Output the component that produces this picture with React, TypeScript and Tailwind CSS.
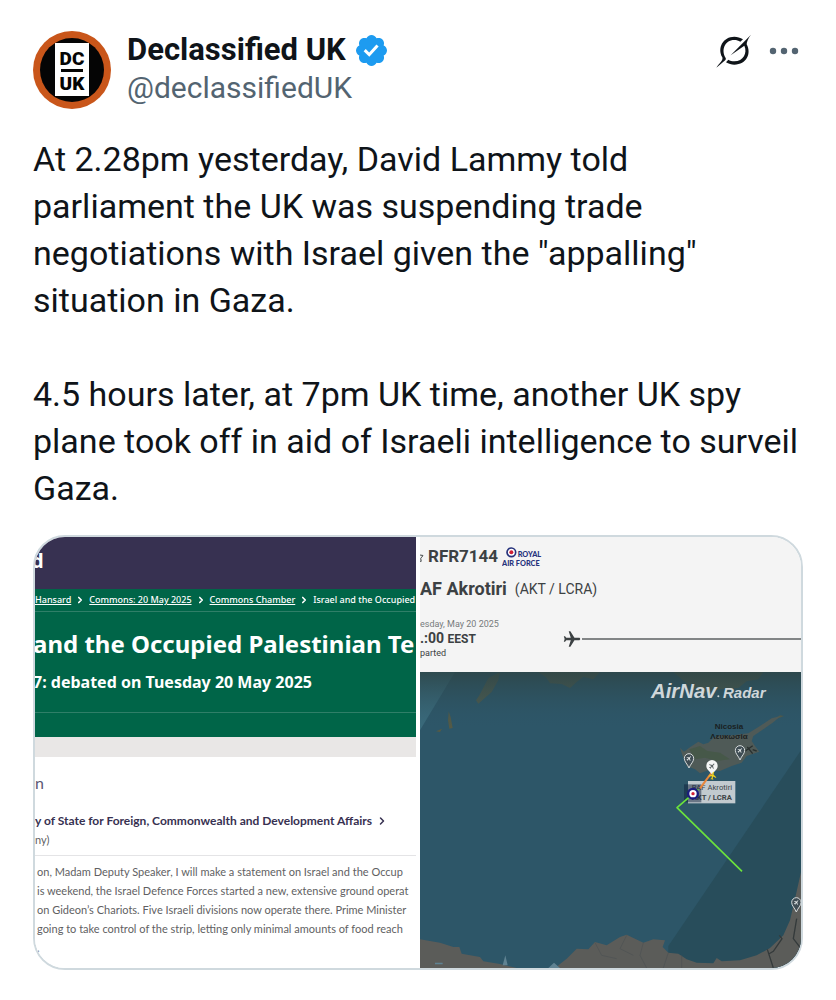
import { ChevronRight, Star } from "lucide-react";

const PLANE =
  "M21 16v-2l-8-5V3.5c0-.83-.67-1.5-1.5-1.5S10 2.67 10 3.5V9l-8 5v2l8-2.5V19l-2 1.5V22l3.5-1 3.5 1v-1.5L13 19v-5.5l8 2.5z";

const post = `At 2.28pm yesterday, David Lammy told
parliament the UK was suspending trade
negotiations with Israel given the "appalling"
situation in Gaza.

4.5 hours later, at 7pm UK time, another UK spy
plane took off in aid of Israeli intelligence to surveil
Gaza.`;

const crumbs = ["Hansard", "Commons: 20 May 2025", "Commons Chamber"];

const speech = [
  "on, Madam Deputy Speaker, I will make a statement on Israel and the Occup",
  "is weekend, the Israel Defence Forces started a new, extensive ground operat",
  "on Gideon’s Chariots. Five Israeli divisions now operate there. Prime Minister",
  "going to take control of the strip, letting only minimal amounts of food reach",
  ".",
];

function Avatar() {
  return (
    <svg viewBox="0 0 78 78" className="size-[78px] shrink-0" role="img" aria-label="Declassified UK">
      <circle cx="39" cy="39" r="39" fill="#c9561a" />
      <circle cx="39" cy="39" r="32" fill="#050505" />
      <rect x="22" y="12" width="34" height="53" fill="#fff" />
      <g
        fill="#050505"
        fontFamily="Roboto, sans-serif"
        fontWeight="900"
        fontSize="19"
        textAnchor="middle"
      >
        <text x="39" y="34">DC</text>
        <text x="39" y="59">UK</text>
      </g>
      <rect x="28" y="38" width="22" height="3" fill="#050505" />
    </svg>
  );
}

function Verified() {
  return (
    <svg viewBox="1.6 1.6 18.8 18.8" className="size-[31px] shrink-0" fill="#1d9bf0" aria-hidden="true">
      <path d="M20.396 11c-.018-.646-.215-1.275-.57-1.816-.354-.54-.852-.972-1.438-1.246.223-.607.27-1.264.14-1.897-.131-.634-.437-1.218-.882-1.687-.47-.445-1.053-.75-1.687-.882-.633-.13-1.29-.083-1.897.14-.273-.587-.704-1.086-1.245-1.44S11.647 1.62 11 1.604c-.646.017-1.273.213-1.813.568s-.969.854-1.24 1.44c-.608-.223-1.267-.272-1.902-.14-.635.13-1.22.436-1.69.882-.445.47-.749 1.055-.878 1.688-.13.633-.08 1.29.144 1.896-.587.274-1.087.705-1.443 1.245-.356.54-.555 1.17-.574 1.817.02.647.218 1.276.574 1.817.356.54.856.972 1.443 1.245-.224.606-.274 1.263-.144 1.896.13.634.433 1.218.877 1.688.47.443 1.054.747 1.687.878.633.132 1.29.084 1.897-.136.274.586.705 1.084 1.246 1.439.54.354 1.17.551 1.816.569.647-.016 1.276-.213 1.817-.567s.972-.854 1.245-1.44c.604.239 1.266.296 1.903.164.636-.132 1.22-.447 1.68-.907.46-.46.776-1.044.908-1.681s.075-1.299-.165-1.903c.586-.274 1.084-.705 1.439-1.246.354-.54.551-1.17.569-1.816zM9.662 14.85l-3.429-3.428 1.293-1.302 2.072 2.072 4.4-4.794 1.347 1.246z" />
    </svg>
  );
}

function Header() {
  return (
    <header className="flex items-start pr-[3px]">
      <Avatar />
      <div className="ml-4 min-w-0 grow">
        <div className="flex h-[38px] items-center gap-2.5">
          <a href="#profile" className="text-[31px] leading-[38px] font-bold whitespace-nowrap">
            Declassified UK
          </a>
          <Verified />
        </div>
        <a href="#profile" className="block text-[30px] leading-[38px] text-[#536471]">
          @declassifiedUK
        </a>
      </div>
      <div className="flex h-10 items-center gap-4">
        <button type="button" aria-label="Explain this post">
          <svg viewBox="46 42 108 102" className="h-[34px] w-9" fill="#0f1419">
            <path d="M47 143C56 130 68 122 65 112C49 84 67 50 101 50C110 50 119 53 127 58L119 65C113 62 108 60 101 60C71 60 61 92 75 114C77 118 74 120 70 124Z" />
            <path d="M151 44L90 106L131 77C141 98 128 124 101 124C94 124 88 122 83 119L76 127C84 132 92 134 101 134C138 134 153 100 138 73C138 66 142 56 151 44Z" />
          </svg>
        </button>
        <button type="button" aria-label="More">
          <svg viewBox="0 0 32 8" className="h-2 w-8" fill="#536471">
            <circle cx="5" cy="4" r="3.2" />
            <circle cx="16" cy="4" r="3.2" />
            <circle cx="27" cy="4" r="3.2" />
          </svg>
        </button>
      </div>
    </header>
  );
}

/* ---------- left image: Hansard page ---------------------------------- */

function Hansard() {
  return (
    <div className="min-w-0 overflow-hidden bg-white font-['Noto_Sans',sans-serif] whitespace-nowrap">
      <div className="h-[52px] bg-[#373151] pt-2">
        <div className="-ml-1 text-xl leading-8 font-bold text-white">d</div>
      </div>
      <div className="h-[148px] bg-[#006548] text-white">
        <nav className="flex h-[23px] items-center gap-1 border-b border-[#2f7f68] text-[9px] font-medium">
          {crumbs.map((c) => (
            <span key={c} className="flex items-center gap-1">
              <a href="#crumb" className="underline">
                {c}
              </a>
              <ChevronRight className="size-2.5" strokeWidth={4} />
            </span>
          ))}
          <span>Israel and the Occupied</span>
        </nav>
        <div className="h-[101px] border-b border-[#2f7f68] pt-3.5">
          <h2 className="-ml-0.5 text-2xl leading-9 font-bold">and the Occupied Palestinian Te</h2>
          <p className="-ml-0.5 pt-1 text-base leading-8 font-bold">7: debated on Tuesday 20 May 2025</p>
        </div>
      </div>
      <div className="h-5 bg-[#e9e7e6]" />
      <div className="pt-4 font-[Lato,sans-serif] text-[#5f5f63]">
        <div className="text-base leading-5 text-[#5a5873]">n</div>
        <div className="mt-4 flex items-center gap-1 text-xs leading-6 font-bold text-[#373151]">
          y of State for Foreign, Commonwealth and Development Affairs
          <ChevronRight className="size-3" strokeWidth={3} />
        </div>
        <div className="text-[11px] leading-[14px]">ny)</div>
        <div className="mt-2 border-t border-[#e4e4e6] pt-1.5 pl-0.5 text-[11px] leading-[19px]">
          {speech.map((line) => (
            <p key={line}>{line}</p>
          ))}
        </div>
      </div>
    </div>
  );
}

/* ---------- right image: flight tracker ------------------------------- */

function Pin({ x, y }: { x: number; y: number }) {
  return (
    <g transform={`translate(${x} ${y})`}>
      <path d="M0 25C-5 12-14 7-14-4A14 14 0 0 1 14-4C14 7 5 12 0 25Z" fill="#3f4d54" stroke="#d5dadb" strokeWidth="3" />
      <path d={PLANE} fill="#e9eded" transform="translate(0 -4) rotate(45) scale(.8) translate(-11.5 -12)" />
    </g>
  );
}

// drawn at three units to the pixel
function FlightMap() {
  return (
    <svg
      viewBox="0 0 1143 888"
      preserveAspectRatio="xMidYMid slice"
      className="block w-full"
      fontFamily="'Liberation Sans', sans-serif"
    >
      <defs>
        <linearGradient id="shade" x1="0" y1="0" x2="0" y2="1">
          <stop offset="0" stopColor="#2d4547" stopOpacity=".85" />
          <stop offset="1" stopColor="#2d5668" stopOpacity="0" />
        </linearGradient>
      </defs>
      <rect width="1143" height="888" fill="#2d5668" />
      <path d="M0 0H105L0 175Z" fill="#3a6a7b" />
      <path d="M1143 235L745 822V888H1143Z" fill="#284d5b" />

      {/* Turkish coast and the islands off it */}
      <g fill="#555a45">
        <path d="M178 70L205 18L240 0L235 25L215 60L175 95L168 85Z" />
        <path d="M355 0H540L520 22L490 14L470 30L450 48L425 36L390 34L378 16Z" />
        <path d="M760 0H1030L1015 22L980 28L955 48L900 52L855 62L820 50L795 30Z" />
        <path d="M86 118L92 135L98 168L88 170L84 145Z M48 178L66 170L60 180Z M1048 150L1080 130L1092 132L1060 145Z" />
      </g>
      <rect width="1143" height="170" fill="url(#shade)" />

      {/* Cyprus */}
      <g transform="translate(600 87)">
        <path
          d="M180 140L192 152L212 137L235 122L250 130L265 125L280 110L300 103L340 103L385 97L420 75L455 52L482 45L460 64L430 85L400 105L395 120L405 135L418 152L400 158L380 165L365 185L335 195L300 210L265 208L240 217L225 205L200 195L188 165Z"
          fill="#4f5a57"
        />
        <path d="M208 145L240 135L262 150L300 155L330 175L290 180L255 170L225 175Z" fill="#41573f" opacity=".6" />
      </g>

      {/* Egypt, Sinai and the Levant */}
      <g fill="#5b5c59">
        <path d="M0 802L60 812L100 825L118 825L125 845L180 855L190 868L240 876L290 888H0Z" />
        <path d="M405 888L440 860L470 830L505 832L525 810L560 820L600 795L620 788L670 812L700 802L735 805L728 825L745 842L775 845L800 862L830 872L880 874L890 858L905 868L960 865L1010 850L1050 828L1090 790L1110 745L1125 680L1143 600V888Z" />
      </g>
      <path
        d="M525 812L545 850L590 860M620 790L600 830L640 850M670 812L660 850L680 888M745 842L730 888M785 850V888"
        stroke="#4d5253"
        strokeWidth="2"
        fill="none"
      />
      <path
        d="M1042 832L1060 888M1046 846L1060 838L1086 800L1078 790M1130 740L1120 800L1143 830"
        stroke="#343a3b"
        strokeWidth="4"
        fill="none"
      />
      <path d="M248 880L256 850L263 880Z M385 888L402 872L420 888Z M45 872H68V877H45Z" fill="#5f8292" />

      <g transform="translate(600 87)">
        <g fontSize="24" fontWeight="700" textAnchor="middle" fill="#1a2122">
          <text x="327" y="84">Nicosia</text>
          <text x="327" y="114">Λευκωσία</text>
        </g>
        <path d="M376 150L398 134M382 138L398 158M398 146L410 150" stroke="#29302f" strokeWidth="4" />
        <Pin x={207} y={176} />
        <Pin x={360} y={152} />
        <rect x="204" y="240" width="142" height="67" fill="#d7dbdd" opacity=".88" />
        <g fontFamily="Roboto, sans-serif" fontSize="23" fill="#3d4548">
          <text x="215" y="268">RAF Akrotiri</text>
          <text x="215" y="298" fontWeight="700">
            AKT / LCRA
          </text>
        </g>
        <rect x="192" y="250" width="52" height="54" fill="#10203c" opacity=".5" />
        <path d="M275 215L240 262" stroke="#e8863b" strokeWidth="6" />
        <path d="M235 265L171 320L366 511" stroke="#6be23c" strokeWidth="5" fill="none" strokeLinejoin="round" />
        <circle cx="219" cy="278" r="18" fill="#1b1b7e" />
        <circle cx="219" cy="278" r="11" fill="#fff" />
        <circle cx="219" cy="278" r="5" fill="#d32238" />
        <path d="M276 220C266 208 259 204 259 194A17 17 0 0 1 293 194C293 204 286 208 276 220Z" fill="#f4f5f5" />
        <path d={PLANE} fill="#5c6365" transform="translate(276 195) rotate(45) scale(.95) translate(-11.5 -12)" />
        <path d={PLANE} fill="#f2d21c" transform="translate(278 224) rotate(12) scale(1.2) translate(-11.5 -12)" />
      </g>
      <Pin x={1129} y={695} />

      <g fill="#cfd7da" fontStyle="italic" fontWeight="700">
        <text x="693" y="77" fontSize="61">
          AirNav
        </text>
        <circle cx="895" cy="73" r="3" />
        <text x="909" y="77" fontSize="45">
          Radar
        </text>
      </g>
    </svg>
  );
}

function Flight() {
  return (
    <div className="min-w-0 overflow-hidden bg-[#f4f4f4] font-[Roboto,sans-serif] whitespace-nowrap text-[#3c4143]">
      <div className="flex h-8 items-center pt-2">
        <Star className="-ml-2 size-3 shrink-0" />
        <span className="ml-1 text-[17px] font-bold">RFR7144</span>
        <svg viewBox="0 0 126 60" className="ml-1 h-5 w-[42px]" fill="#26327c" fontFamily="Lato, sans-serif" fontWeight="900">
          <circle cx="28" cy="16" r="13" stroke="#26327c" strokeWidth="5" fill="#fff" />
          <circle cx="28" cy="16" r="6" fill="#cf2036" />
          <text x="47" y="29" fontSize="22">ROYAL</text>
          <text x="0" y="57" fontSize="22">AIR FORCE</text>
        </svg>
      </div>
      <div className="flex h-10 items-center gap-2">
        <span className="text-lg font-bold">AF Akrotiri</span>
        <span className="text-sm">(AKT / LCRA)</span>
      </div>
      <div className="flex items-center pt-2 pb-3">
        <div className="w-[143px]">
          <div className="text-[9px] leading-[14px] text-[#777b7c]">esday, May 20 2025</div>
          <div className="text-sm leading-[15px] font-bold">
            .:00 <span className="text-xs leading-[15px]">EEST</span>
          </div>
          <div className="text-[9px] leading-[13px]">parted</div>
        </div>
        <svg viewBox="1 1 21 22" className="size-[18px] shrink-0 rotate-90" fill="#3c4143" aria-hidden="true">
          <path d={PLANE} />
        </svg>
        <div className="ml-px h-0.5 grow bg-[#828586]" />
      </div>
      <FlightMap />
    </div>
  );
}

export default function App() {
  return (
    <article className="bg-white px-[33px] py-[31px] font-[Roboto,sans-serif] text-[#0f1419]">
      <Header />
      <p className="mt-[27px] text-[34px] leading-[47px] whitespace-pre-line">{post}</p>
      <div className="mt-[23px] grid grid-cols-2 gap-1 overflow-hidden rounded-[32px] border-2 border-[#cfd9de]">
        <Hansard />
        <Flight />
      </div>
    </article>
  );
}
